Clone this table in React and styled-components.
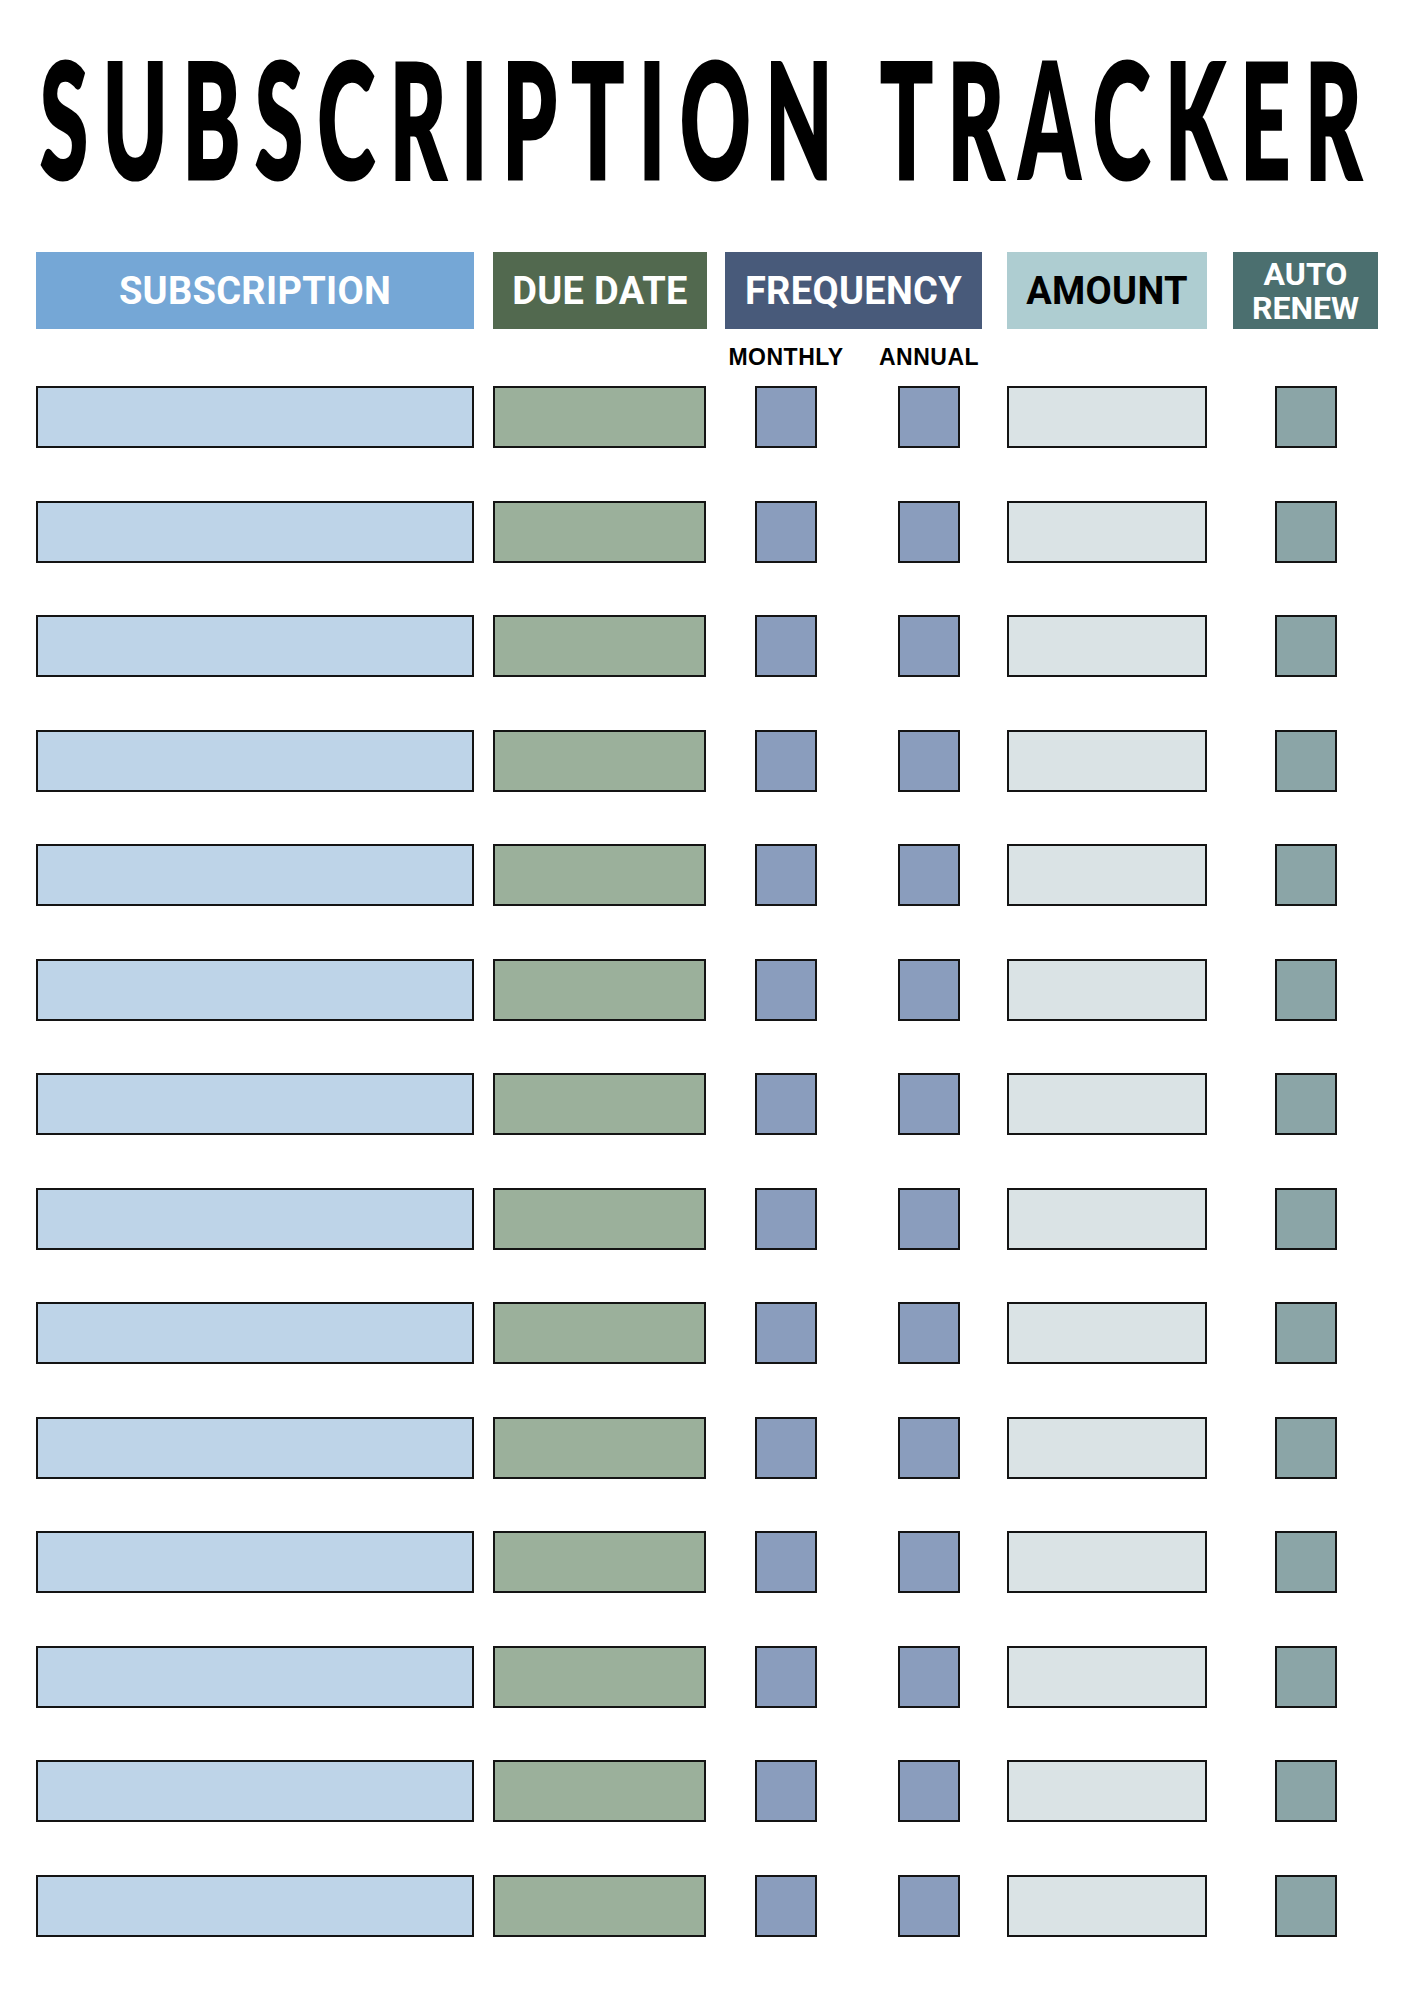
import styled, { createGlobalStyle } from 'styled-components'

const GlobalStyle = createGlobalStyle`
    html, body {
        margin: 0;
        padding: 0;
        background: #ffffff;
    }
    * {
        box-sizing: border-box;
    }
`;

const columns = [
    { key: 'sub', label: 'SUBSCRIPTION', width: 438, gap: 19, head: '#75a7d6', ink: '#ffffff', fill: '#bed4e8' },
    { key: 'due', label: 'DUE DATE', width: 214, gap: 18, head: '#52694f', ink: '#ffffff', fill: '#9bb09b' },
    { key: 'freq', label: 'FREQUENCY', width: 257, gap: 25, head: '#485a7a', ink: '#ffffff', fill: '#8a9dbd' },
    { key: 'amt', label: 'AMOUNT', width: 200, gap: 26, head: '#aecdd1', ink: '#000000', fill: '#dae3e5' },
    { key: 'auto', label: 'AUTO RENEW', width: 145, gap: 0, head: '#4b6f6f', ink: '#ffffff', fill: '#8ba5a7' },
];

const ROWS = 14;

function App() {
    return (
        <Page>
            <GlobalStyle />
            <TitleBar>
                <Title>SUBSCRIPTION TRACKER</Title>
            </TitleBar>

            <HeaderRow>
                {columns.map((col) => (
                    <HeaderCell key={col.key} $w={col.width} $gap={col.gap} $bg={col.head} $ink={col.ink} $small={col.key === 'auto'}>
                        {col.key === 'auto' ? (
                            <Stack>
                                <span>AUTO</span>
                                <span>RENEW</span>
                            </Stack>
                        ) : col.label}
                    </HeaderCell>
                ))}
            </HeaderRow>

            <SubLabelRow>
                <Spacer $w={438 + 19 + 214 + 18} />
                <FreqCell>
                    <SubLabel>MONTHLY</SubLabel>
                    <SubLabel>ANNUAL</SubLabel>
                </FreqCell>
            </SubLabelRow>

            <RowList>
                {Array.from({ length: ROWS }).map((_, i) => (
                    <Row key={i}>
                        <Slot $w={438} $gap={19}>
                            <Field $bg={columns[0].fill} />
                        </Slot>
                        <Slot $w={214} $gap={18}>
                            <Field $bg={columns[1].fill} $w={213} />
                        </Slot>
                        <FreqCell $gap={25}>
                            <Check $bg={columns[2].fill} />
                            <Check $bg={columns[2].fill} />
                        </FreqCell>
                        <Slot $w={200} $gap={26}>
                            <Field $bg={columns[3].fill} />
                        </Slot>
                        <Slot $w={145} $center>
                            <Check $bg={columns[4].fill} />
                        </Slot>
                    </Row>
                ))}
            </RowList>
        </Page>
    );
}

const Page = styled.div`
    width: 1414px;
    min-height: 2000px;
    padding-left: 36px;
    background: #ffffff;
    font-family: "Liberation Sans", Arial, sans-serif;
`;

const TitleBar = styled.div`
    height: 252px;
    padding-top: 37px;
    padding-left: 4px;
    overflow: visible;
`;

// the title face is a tall condensed display font, so a heavy sans is stretched to fit
const Title = styled.h1`
    margin: 0;
    font-family: Lato, "Liberation Sans", sans-serif;
    font-weight: 900;
    font-size: 100px;
    line-height: 1;
    letter-spacing: 17px;
    white-space: nowrap;
    color: #000000;
    -webkit-text-stroke: 2px #000000;
    transform: scale(0.87, 1.6);
    transform-origin: left top;
`;

const HeaderRow = styled.div`
    display: flex;
    height: 77px;
`;

const HeaderCell = styled.div`
    width: ${({ $w }) => $w}px;
    margin-right: ${({ $gap }) => $gap}px;
    height: 100%;
    display: flex;
    align-items: center;
    justify-content: center;
    text-align: center;
    background: ${({ $bg }) => $bg};
    color: ${({ $ink }) => $ink};
    font-family: Roboto, "Liberation Sans", sans-serif;
    font-weight: 700;
    font-size: ${({ $small }) => ($small ? '32px' : '38px')};
    line-height: ${({ $small }) => ($small ? '34px' : '1')};
    letter-spacing: ${({ $small }) => ($small ? '0' : '0.3px')};
`;

const Stack = styled.div`
    display: flex;
    flex-direction: column;
    align-items: center;
    padding-top: 1px;
`;

const SubLabelRow = styled.div`
    display: flex;
    height: 57px;
    padding-top: 17px;
`;

const Spacer = styled.div`
    width: ${({ $w }) => $w}px;
    flex: none;
`;

const FreqCell = styled.div`
    width: 257px;
    margin-right: ${({ $gap }) => $gap || 0}px;
    flex: none;
    display: flex;
    gap: 81px;
    padding-left: 30px;
`;

const SubLabel = styled.div`
    width: 62px;
    display: flex;
    justify-content: center;
    white-space: nowrap;
    font-family: "Liberation Sans", Arial, sans-serif;
    font-weight: 700;
    font-size: 23px;
    line-height: 23px;
    letter-spacing: 0.5px;
    color: #000000;
`;

const RowList = styled.div`
    display: flex;
    flex-direction: column;
    gap: 52.5px;
`;

const Row = styled.div`
    display: flex;
    height: 62px;
`;

const Slot = styled.div`
    width: ${({ $w }) => $w}px;
    margin-right: ${({ $gap }) => $gap || 0}px;
    flex: none;
    display: flex;
    justify-content: ${({ $center }) => ($center ? 'center' : 'flex-start')};
`;

const Field = styled.div`
    width: ${({ $w }) => ($w ? `${$w}px` : '100%')};
    height: 62px;
    background: ${({ $bg }) => $bg};
    border: 2px solid #141414;
`;

const Check = styled.div`
    width: 62px;
    height: 62px;
    flex: none;
    background: ${({ $bg }) => $bg};
    border: 2px solid #141414;
`;

export default App
